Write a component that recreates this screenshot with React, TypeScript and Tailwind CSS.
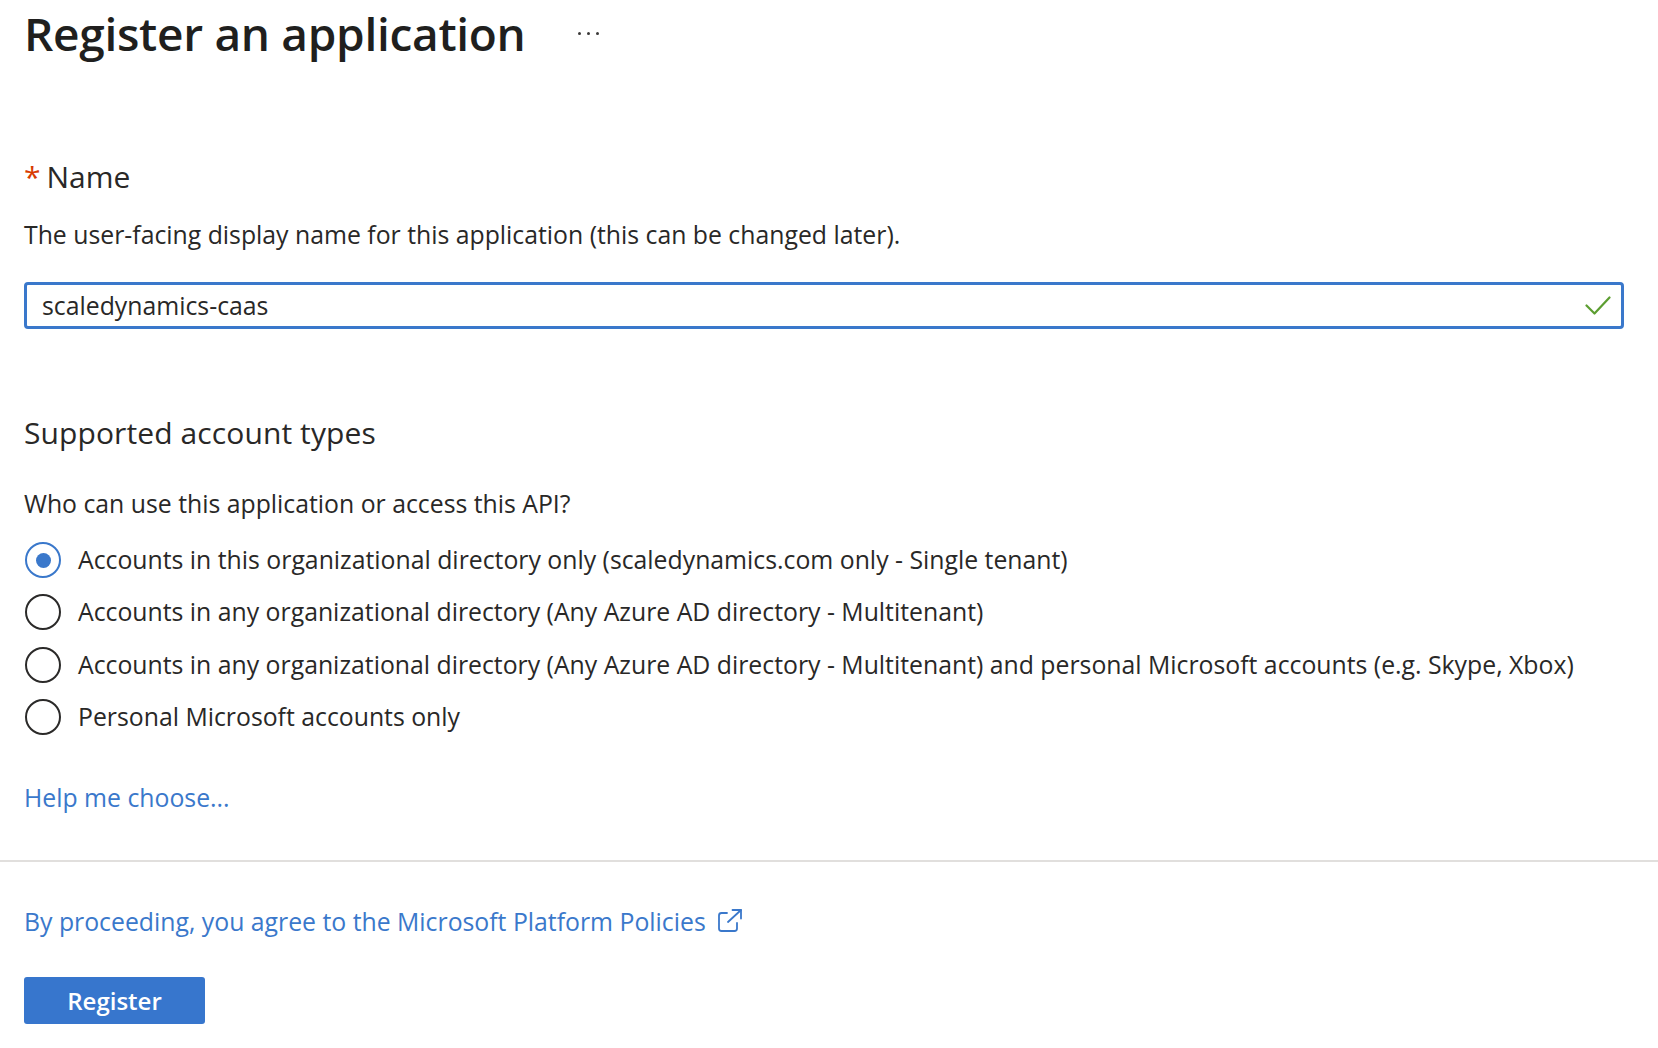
import { useState } from 'react';

// Register an application — Azure AD style form

const accountTypes = [
  'Accounts in this organizational directory only (scaledynamics.com only - Single tenant)',
  'Accounts in any organizational directory (Any Azure AD directory - Multitenant)',
  'Accounts in any organizational directory (Any Azure AD directory - Multitenant) and personal Microsoft accounts (e.g. Skype, Xbox)',
  'Personal Microsoft accounts only',
];

function Radio({ checked }: { checked: boolean }) {
  return (
    <span
      className={`flex h-[36px] w-[36px] shrink-0 items-center justify-center rounded-full border-2 ${
        checked ? 'border-[#3a78cb]' : 'border-[#2b2a29]'
      }`}
    >
      {checked && <span className="h-[15px] w-[15px] rounded-full bg-[#3a78cb]" />}
    </span>
  );
}

function ExternalIcon() {
  return (
    <svg width="26" height="24" viewBox="0 0 26 24" fill="none" stroke="#3a78cb" strokeWidth="1.8" strokeLinecap="round" strokeLinejoin="round">
      <path d="M10 4H4.5A2.5 2.5 0 0 0 2 6.5v13A2.5 2.5 0 0 0 4.5 22h13a2.5 2.5 0 0 0 2.5-2.5V14" />
      <path d="M11 13L24 1" />
      <path d="M15.5 1H24v8.5" />
    </svg>
  );
}

export default function App() {
  const [name, setName] = useState('scaledynamics-caas');
  const [selected, setSelected] = useState(0);

  return (
    <div className="min-h-screen bg-white text-[#292827] font-['Open_Sans',sans-serif]">
      <div className="pl-[24px] pr-[34px]">
        {/* Title */}
        <div className="flex h-[66px] items-center">
          <h1 className="text-[46px] font-semibold leading-[66px] tracking-[-0.3px] text-[#201f1e]">
            Register an application
          </h1>
          <div className="ml-[52px] flex items-center gap-[6px]">
            <span className="h-[3px] w-[3px] rounded-full bg-[#3b3a39]" />
            <span className="h-[3px] w-[3px] rounded-full bg-[#3b3a39]" />
            <span className="h-[3px] w-[3px] rounded-full bg-[#3b3a39]" />
          </div>
        </div>

        {/* Name */}
        <div className="mt-[91px] flex items-center text-[30px] leading-[40px]">
          <span className="mr-[6px] text-[#d83b01]">*</span>
          <span>Name</span>
        </div>
        <p className="mt-[22px] text-[24.8px] leading-[30px]">
          The user-facing display name for this application (this can be changed later).
        </p>
        <div className="mt-[33px] flex h-[47px] items-center rounded-[4px] border-[3px] border-[#3a78cb] pl-[15px] pr-[10px]">
          <input
            value={name}
            onChange={(e) => setName(e.target.value)}
            className="flex-1 bg-transparent text-[24.8px] text-[#292827] outline-none"
          />
          <svg width="26" height="19" viewBox="0 0 26 19" fill="none" stroke="#5c9e31" strokeWidth="2.2" strokeLinecap="round" strokeLinejoin="round">
            <path d="M1.5 9.5l8 8L24.5 1.5" />
          </svg>
        </div>

        {/* Supported account types */}
        <h2 className="mt-[84px] text-[30px] leading-[40px] tracking-[0.1px]">Supported account types</h2>
        <p className="mt-[35px] text-[24.8px] leading-[30px]">Who can use this application or access this API?</p>
        <div className="mt-[16px] flex flex-col">
          {accountTypes.map((label, i) => (
            <label
              key={i}
              onClick={() => setSelected(i)}
              className="flex h-[52.3px] cursor-pointer items-center gap-[17px] pl-[1px] text-[24.8px]"
            >
              <Radio checked={selected === i} />
              <span className="-mt-[1px]">{label}</span>
            </label>
          ))}
        </div>
        <a href="#" className="mt-[39px] block text-[24.8px] leading-[30px] text-[#3a78cb]">
          Help me choose...
        </a>
      </div>

      <div className="mt-[48px] h-[2px] bg-[#e1dfdd]" />

      <div className="px-[24px]">
        <a href="#" className="mt-[44px] flex items-center gap-[11px] text-[24.8px] leading-[30px] text-[#3a78cb]">
          <span>By proceeding, you agree to the Microsoft Platform Policies</span>
          <ExternalIcon />
        </a>
        <button className="mt-[41px] h-[47px] w-[181px] rounded-[3px] bg-[#3776cd] text-[24px] font-semibold text-white">
          Register
        </button>
      </div>
    </div>
  );
}
